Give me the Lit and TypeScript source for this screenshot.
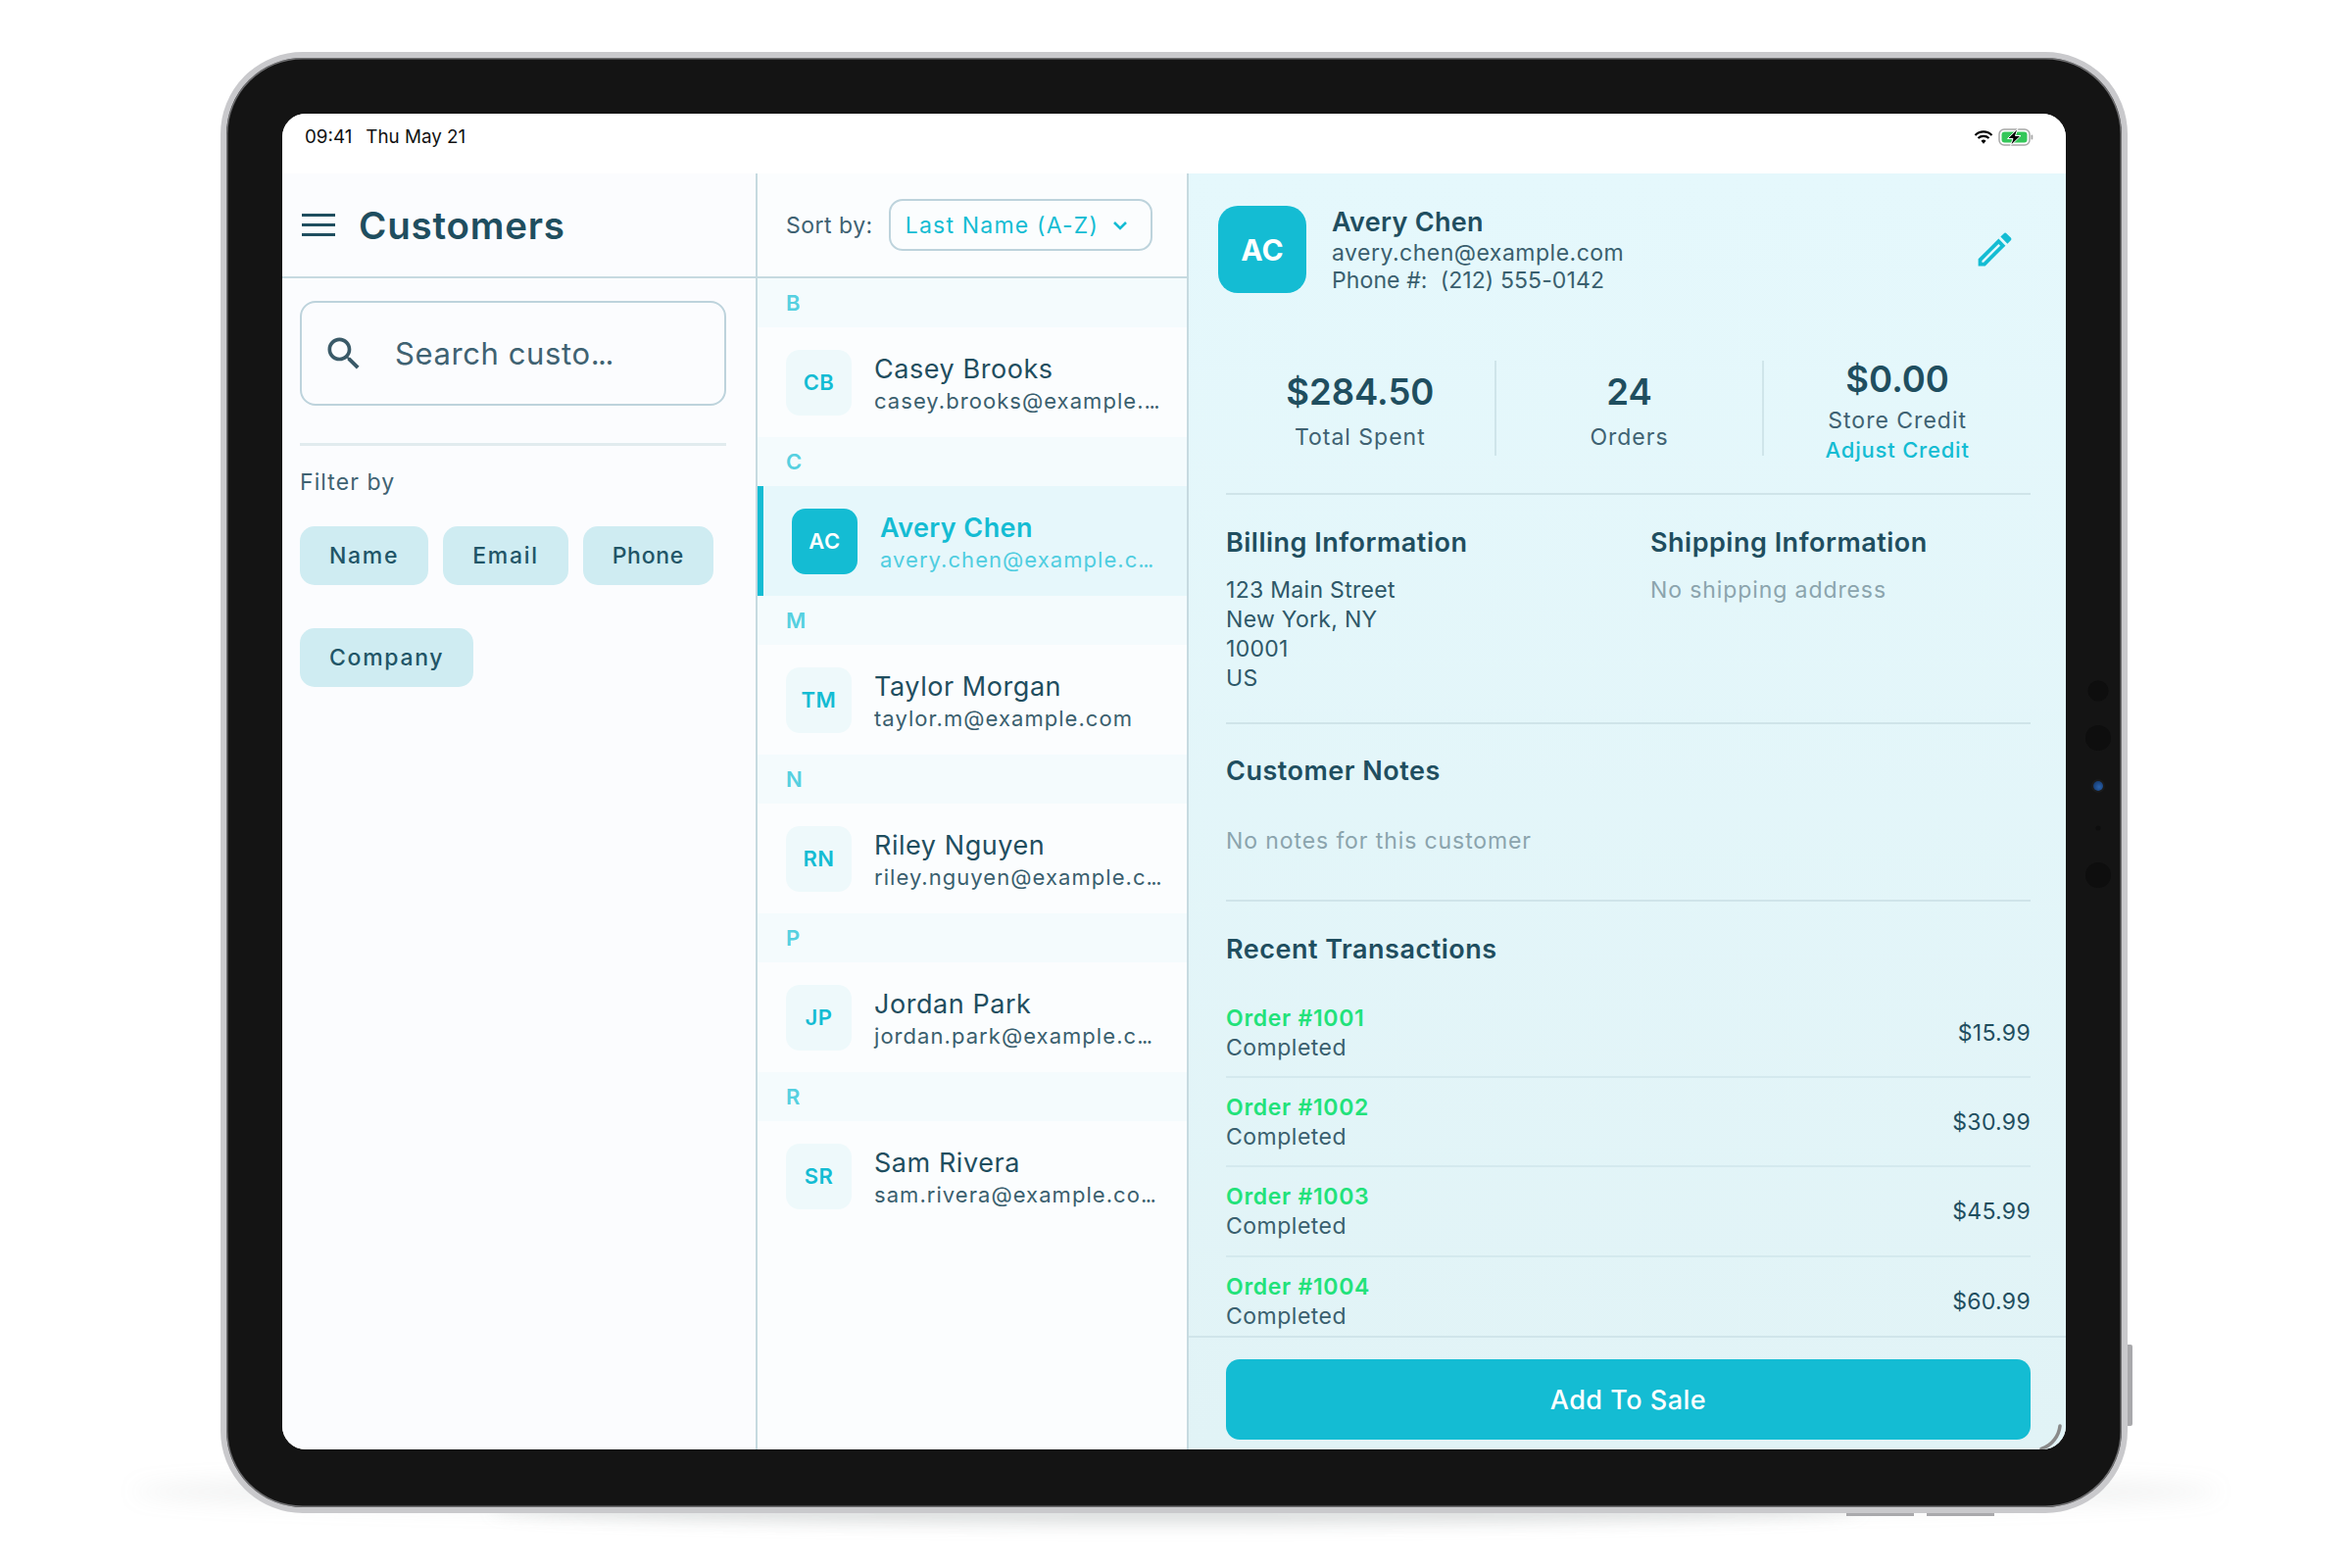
import { LitElement, html, css } from "lit";
import { customElement } from "lit/decorators.js";

const customers = [
  { letter: "B", initials: "CB", name: "Casey Brooks", email: "casey.brooks@example.", active: false },
  { letter: "C", initials: "AC", name: "Avery Chen", email: "avery.chen@example.c", active: true },
  { letter: "M", initials: "TM", name: "Taylor Morgan", email: "taylor.m@example.com", active: false, full: true },
  { letter: "N", initials: "RN", name: "Riley Nguyen", email: "riley.nguyen@example.c", active: false },
  { letter: "P", initials: "JP", name: "Jordan Park", email: "jordan.park@example.c", active: false },
  { letter: "R", initials: "SR", name: "Sam Rivera", email: "sam.rivera@example.co", active: false },
];
const orders = [
  { id: "Order #1001", total: "$15.99" },
  { id: "Order #1002", total: "$30.99" },
  { id: "Order #1003", total: "$45.99" },
  { id: "Order #1004", total: "$60.99" },
];

@customElement("app-root")
export class AppRoot extends LitElement {
  static styles = css`
    :host { display: block; width: 2400px; height: 1600px; background: #fff; overflow: hidden; font-family: Inter, "Liberation Sans", sans-serif; color: #1f4e5f; }
    * { box-sizing: border-box; }
    .stage { position: relative; width: 2400px; height: 1600px; padding: 53px 0 0 225px; }
    .shadow-wide { position: absolute; left: 135px; top: 1500px; width: 2130px; height: 44px; border-radius: 50%; background: rgba(120,130,130,.11); filter: blur(11px); }
    .shadow-low { position: absolute; left: 500px; top: 1526px; width: 1400px; height: 30px; border-radius: 50%; background: rgba(120,130,130,.2); filter: blur(8px); }
    .device { position: relative; width: 1946px; height: 1491px; padding: 57px 57px 58px 57px; border-radius: 84px; background: #141414; border: 6px solid #c9c9cc; box-shadow: inset 0 0 0 1.5px #6e6e70; }
    .btn-side { position: absolute; left: 1946px; top: 1313px; width: 5px; height: 83px; background: #a9a9ac; border-radius: 0 2px 2px 0; margin-left: -6px; }
    .btn-vol { position: absolute; top: 1485px; width: 69px; height: 3px; background: #a9a9ac; }
    .btn-vol.a { left: 1653px; }
    .btn-vol.b { left: 1735px; }
    .lens { position: absolute; left: 1910px; border-radius: 50%; background: #0e0e0e; transform: translate(-50%, -50%); }
    .lens.l1 { top: 646px; width: 21px; height: 21px; }
    .lens.l2 { top: 694px; width: 26px; height: 26px; }
    .lens.l3 { top: 743px; width: 10px; height: 10px; background: radial-gradient(circle at 60% 60%, #2a62ad, #102f5c); box-shadow: 0 0 0 2px #1b1b1b; }
    .lens.l4 { top: 786px; width: 5px; height: 5px; }
    .lens.l5 { top: 834px; width: 26px; height: 26px; }
    .screen { position: relative; width: 1820px; height: 1363px; border-radius: 24px; overflow: hidden; background: #fff; display: flex; flex-direction: column; }
    .status { height: 61px; flex: none; background: #fff; display: flex; justify-content: space-between; align-items: flex-start; padding: 11px 33px 0 23px; font-size: 18.8px; line-height: 26px; color: #111; }
    .status .time { display: flex; gap: 14px; }
    .status .icons { display: flex; align-items: center; gap: 5px; height: 26px; }
    .panes { flex: 1; display: flex; min-height: 0; }
    .sidebar { width: 485px; flex: none; border-right: 2px solid #c6dae0; background: #fbfcfe; }
    .side-head { height: 107px; display: flex; align-items: center; gap: 24px; padding-left: 20px; border-bottom: 2px solid #c6dae0; }
    .burger { display: flex; flex-direction: column; gap: 7px; width: 34px; }
    .burger i { display: block; height: 3px; background: #1f4e5f; }
    .side-head h1 { margin: 0; font-size: 38.5px; letter-spacing: .8px; font-weight: 600; color: #1f4e5f; }
    .side-body { padding: 23px 30px 0 18px; }
    .search { height: 107px; display: flex; align-items: center; gap: 30px; padding-left: 21px; border: 2px solid #bdd3dc; border-radius: 16px; font-size: 31px; letter-spacing: .6px; color: #3f6272; }
    .search svg { width: 44px; height: 44px; flex: none; fill: #3a5a68; }
    .dots { letter-spacing: -1.5px; }
    .rule-light { height: 3px; background: #e1ebee; margin-top: 38px; }
    .filter-label { margin-top: 22px; font-size: 23px; line-height: 30px; letter-spacing: 1.1px; color: #3f6272; }
    .chips { display: flex; flex-wrap: wrap; gap: 44px 15px; margin-top: 30px; }
    .chip { height: 60px; padding: 0 30px; display: flex; align-items: center; border-radius: 15px; background: #cfecf2; color: #215567; font-size: 23px; font-weight: 500; letter-spacing: 1.7px; }
    .chip.tight { letter-spacing: .7px; }
    .list { width: 440px; flex: none; border-right: 2px solid #c6dae0; background: #fbfdfe; }
    .list-head { height: 107px; display: flex; align-items: center; gap: 16px; padding-left: 29px; border-bottom: 2px solid #c6dae0; font-size: 23px; letter-spacing: .5px; color: #3f6272; }
    .select { width: 269px; height: 53px; display: flex; align-items: center; justify-content: space-between; padding: 0 22px 0 15px; border: 2px solid #bdd3dc; border-radius: 14px; color: #14bcd3; font-size: 23px; letter-spacing: 1.2px; }
    .select svg { width: 18px; height: 12px; fill: none; stroke: #14bcd3; stroke-width: 2.6; }
    .letter { height: 50px; display: flex; align-items: center; padding-left: 29px; background: #f4fbfd; color: #56d0e0; font-size: 22px; font-weight: 600; }
    .row { height: 112px; display: flex; align-items: center; gap: 23px; padding-left: 29px; }
    .row.active { background: #e6f7fb; border-left: 6px solid #14bcd3; }
    .avatar { width: 67px; height: 67px; flex: none; border-radius: 14px; background: #eef9fb; color: #14bcd3; display: flex; align-items: center; justify-content: center; font-size: 22px; font-weight: 600; letter-spacing: .5px; }
    .row.active .avatar { background: #14bcd3; color: #fff; }
    .row .text { padding-top: 3px; white-space: nowrap; }
    .row .name { font-size: 27px; line-height: 34px; color: #1f4e5f; letter-spacing: .55px; }
    .row .email { font-size: 22px; line-height: 30px; color: #3a5f6e; letter-spacing: 1.05px; }
    .row.active .name { color: #14bcd3; font-weight: 600; letter-spacing: .4px; }
    .row.active .email { color: #4fcde0; }
    .detail { flex: 1; min-width: 0; display: flex; flex-direction: column; background: linear-gradient(#e5f8fc, #e1f3f6); }
    .detail-body { flex: 1; min-height: 0; overflow: hidden; padding: 0 36px 0 38px; }
    .profile { display: flex; align-items: center; padding-top: 32px; margin-left: -8px; margin-right: 14px; }
    .profile .big { width: 90px; height: 89px; flex: none; border-radius: 20px; background: #14bcd3; color: #fff; display: flex; align-items: center; justify-content: center; font-size: 30px; font-weight: 700; }
    .profile .info { flex: 1; margin-left: 26px; padding-top: 1px; }
    .profile .nm { font-size: 27px; line-height: 34px; font-weight: 600; letter-spacing: .3px; }
    .profile .ln { font-size: 23px; line-height: 28px; letter-spacing: .5px; color: #3a5f6e; }
    .profile .ln.ph { letter-spacing: .1px; }
    .profile svg { width: 45px; height: 45px; fill: #14bcd3; }
    .stats { display: grid; grid-template-columns: repeat(3, 1fr); margin-top: 68px; }
    .stat { height: 97px; display: flex; flex-direction: column; align-items: center; justify-content: center; }
    .stat + .stat { border-left: 2px solid #cfe5ea; }
    .stat .val { font-size: 36.5px; line-height: 54px; font-weight: 600; }
    .stat .lab { font-size: 23px; line-height: 30px; color: #3f6272; letter-spacing: 1px; }
    .stat .lab.off { margin-top: 4px; }
    .stat .link { font-size: 22px; line-height: 30px; font-weight: 500; color: #14bcd3; letter-spacing: .8px; }
    .rule { height: 2px; background: #cfe4e9; }
    .rule.stats-rule { margin-top: 38px; }
    .cols { display: grid; grid-template-columns: 433px 1fr; padding-top: 31px; }
    h2 { margin: 0; font-size: 27px; line-height: 36px; font-weight: 600; color: #1f4e5f; letter-spacing: .5px; }
    .addr { margin-top: 15px; font-size: 23px; line-height: 30px; color: #2e5868; letter-spacing: .3px; }
    .muted { color: #8ba4ad; letter-spacing: .9px; }
    .sec { padding-top: 30px; }
    .sec.last { padding-top: 31px; }
    .addr-end { margin-top: 30px; }
    .note { margin-top: 38px; font-size: 23px; line-height: 30px; }
    .note-end { margin-top: 45px; }
    .orders { margin-top: 22px; }
    .order { height: 91.2px; display: flex; justify-content: space-between; align-items: center; padding: 1px 0 0; border-bottom: 2px solid #d4e9ee; }
    .order .oid { font-size: 23px; line-height: 30px; font-weight: 600; color: #22e27a; letter-spacing: .7px; }
    .order .st { font-size: 23px; line-height: 30px; color: #3a5f6e; letter-spacing: .5px; }
    .order .amt { font-size: 23px; color: #1f4e5f; letter-spacing: .3px; }
    .footer { flex: none; height: 116px; border-top: 2px solid #d0e5ea; padding: 22px 36px 0 38px; }
    .cta { height: 82px; border-radius: 14px; background: #14bcd3; color: #fff; display: flex; align-items: center; justify-content: center; font-size: 27px; font-weight: 500; letter-spacing: .5px; }
    .arc { position: absolute; right: 0; bottom: 0; width: 30px; height: 30px; fill: none; stroke: #8a8a8a; stroke-width: 3.5; stroke-linecap: round; }
  `;

  render() {
    return html`
      <div class="stage">
        <div class="shadow-wide"></div>
        <div class="shadow-low"></div>
        <div class="device">
          <div class="btn-side"></div>
          <div class="btn-vol a"></div>
          <div class="btn-vol b"></div>
          <div class="lens l1"></div>
          <div class="lens l2"></div>
          <div class="lens l3"></div>
          <div class="lens l4"></div>
          <div class="lens l5"></div>
          <div class="screen">
            ${this.statusBar()}
            <div class="panes">
              ${this.sidebar()}
              ${this.list()}
              ${this.detail()}
            </div>
            <svg class="arc" viewBox="0 0 30 30"><path d="M24 6C23 16 16 26 5 29.5"></path></svg>
          </div>
        </div>
      </div>
    `;
  }

  statusBar() {
    return html`
      <div class="status">
        <div class="time"><span>09:41</span><span>Thu May 21</span></div>
        <div class="icons">
          <svg width="20" height="14" viewBox="0 0 19 14" fill="none" stroke="#000" stroke-width="2.2">
            <path d="M1 5A12 12 0 0 1 18 5"></path>
            <path d="M4 8A8 8 0 0 1 15 8"></path>
            <path d="M9.5 13.7L7 10.8A3.6 3.6 0 0 1 12 10.8Z" fill="#000" stroke="none"></path>
          </svg>
          <svg width="36" height="18" viewBox="0 0 36 18">
            <rect x="1" y="1" width="31" height="16" rx="5" fill="none" stroke="#a8a8a8" stroke-width="1.5"></rect>
            <rect x="3.5" y="3.5" width="26" height="11" rx="3" fill="#34c759"></rect>
            <rect x="33.5" y="6.5" width="1.8" height="5" rx="1" fill="#a8a8a8"></rect>
            <path d="M20 0.3L9.5 10.5H15L12.5 17.7L23 7.5H17.5Z" fill="#000" stroke="#fff" stroke-width="1"></path>
          </svg>
        </div>
      </div>
    `;
  }

  sidebar() {
    return html`
      <aside class="sidebar">
        <div class="side-head">
          <div class="burger"><i></i><i></i><i></i></div>
          <h1>Customers</h1>
        </div>
        <div class="side-body">
          <div class="search">
            <svg viewBox="0 0 24 24"><path d="M15.5 14h-.79l-.28-.27C15.41 12.59 16 11.11 16 9.5 16 5.91 13.09 3 9.5 3S3 5.91 3 9.5 5.91 16 9.5 16c1.61 0 3.09-.59 4.23-1.57l.27.28v.79l5 4.99L20.49 19l-4.99-5zm-6 0C7.01 14 5 11.99 5 9.5S7.01 5 9.5 5 14 7.01 14 9.5 11.99 14 9.5 14z"></path></svg>
            <span>Search custo<span class="dots">...</span></span>
          </div>
          <div class="rule-light"></div>
          <div class="filter-label">Filter by</div>
          <div class="chips">
            ${["Name", "Email", "Phone", "Company"].map(
              (c) => html`<div class="chip ${c === "Phone" ? "tight" : ""}">${c}</div>`
            )}
          </div>
        </div>
      </aside>
    `;
  }

  list() {
    return html`
      <section class="list">
        <div class="list-head">
          <span>Sort by:</span>
          <div class="select">
            <span>Last Name (A-Z)</span>
            <svg viewBox="0 0 18 12"><path d="M3 3l6 6 6-6"></path></svg>
          </div>
        </div>
        ${customers.map(
          (c) => html`
            <div class="letter">${c.letter}</div>
            <div class="row ${c.active ? "active" : ""}">
              <div class="avatar">${c.initials}</div>
              <div class="text">
                <div class="name">${c.name}</div>
                <div class="email">${c.email}${c.full ? "" : html`<span class="dots">...</span>`}</div>
              </div>
            </div>
          `
        )}
      </section>
    `;
  }

  detail() {
    return html`
      <section class="detail">
        <div class="detail-body">
          <div class="profile">
            <div class="big">AC</div>
            <div class="info">
              <div class="nm">Avery Chen</div>
              <div class="ln">avery.chen@example.com</div>
              <div class="ln ph">Phone #:&nbsp; (212) 555-0142</div>
            </div>
            <svg viewBox="0 0 24 24"><path d="M3 17.25V21h3.75L17.81 9.94l-3.75-3.75L3 17.25zM5.92 19H5v-.92l9.06-9.06.92.92L5.92 19zM20.71 5.63l-2.34-2.34c-.39-.39-1.02-.39-1.41 0l-1.83 1.83 3.75 3.75 1.83-1.83c.39-.39.39-1.02 0-1.41z"></path></svg>
          </div>
          <div class="stats">
            <div class="stat"><div class="val">$284.50</div><div class="lab off">Total Spent</div></div>
            <div class="stat"><div class="val">24</div><div class="lab off">Orders</div></div>
            <div class="stat"><div class="val">$0.00</div><div class="lab">Store Credit</div><div class="link">Adjust Credit</div></div>
          </div>
          <div class="rule stats-rule"></div>
          <div class="cols">
            <div>
              <h2>Billing Information</h2>
              <div class="addr">123 Main Street<br />New York, NY<br />10001<br />US</div>
            </div>
            <div>
              <h2>Shipping Information</h2>
              <div class="addr muted">No shipping address</div>
            </div>
          </div>
          <div class="rule addr-end"></div>
          <div class="sec">
            <h2>Customer Notes</h2>
            <div class="note muted">No notes for this customer</div>
          </div>
          <div class="rule note-end"></div>
          <div class="sec last">
            <h2>Recent Transactions</h2>
            <div class="orders">
              ${orders.map(
                (o) => html`
                  <div class="order">
                    <div><div class="oid">${o.id}</div><div class="st">Completed</div></div>
                    <div class="amt">${o.total}</div>
                  </div>
                `
              )}
            </div>
          </div>
        </div>
        <div class="footer"><div class="cta">Add To Sale</div></div>
      </section>
    `;
  }
}
